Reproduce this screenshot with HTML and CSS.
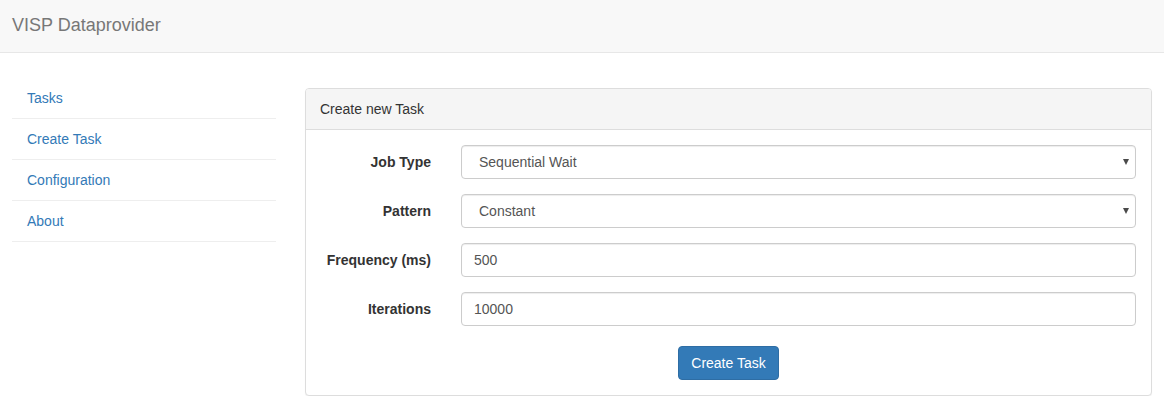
FILE: index.html
```html
<!DOCTYPE html>
<html lang="en">
<head>
<meta charset="utf-8">
<title>VISP Dataprovider</title>
<link rel="stylesheet" href="styles.css">
</head>
<body>
<nav class="navbar">
  <a class="brand" href="#">VISP Dataprovider</a>
</nav>
<div class="main">
  <aside class="sidebar">
    <ul class="side-nav">
      <li><a href="#">Tasks</a></li>
      <li><a href="#">Create Task</a></li>
      <li><a href="#">Configuration</a></li>
      <li><a href="#">About</a></li>
    </ul>
  </aside>
  <section class="content">
    <div class="panel">
      <div class="panel-heading">Create new Task</div>
      <form class="panel-body">
        <div class="form-row">
          <label class="form-label" for="jobType">Job Type</label>
          <div class="select-wrap">
            <select id="jobType" class="form-control form-select">
              <option>Sequential Wait</option>
            </select>
          </div>
        </div>
        <div class="form-row">
          <label class="form-label" for="pattern">Pattern</label>
          <div class="select-wrap">
            <select id="pattern" class="form-control form-select">
              <option>Constant</option>
            </select>
          </div>
        </div>
        <div class="form-row">
          <label class="form-label" for="freq">Frequency (ms)</label>
          <input id="freq" class="form-control" type="text" value="500">
        </div>
        <div class="form-row">
          <label class="form-label" for="iter">Iterations</label>
          <input id="iter" class="form-control" type="text" value="10000">
        </div>
        <div class="actions">
          <button type="button" class="btn-primary">Create Task</button>
        </div>
      </form>
    </div>
  </section>
</div>
</body>
</html>
```
FILE: styles.css
```css
* { box-sizing: border-box; }
html, body {
  margin: 0;
  padding: 0;
  background: #fff;
  font-family: "Liberation Sans", Arial, Helvetica, sans-serif;
  font-size: 14px;
  line-height: 20px;
  color: #333;
}
a { color: #337ab7; text-decoration: none; }

.navbar {
  height: 53px;
  background: #f8f8f8;
  border-bottom: 1px solid #e7e7e7;
  display: flex;
  align-items: center;
  padding-left: 12px;
}
.brand {
  color: #777;
  font-size: 18px;
  line-height: 20px;
  padding-bottom: 2px;
}

.main {
  display: flex;
  gap: 29px;
  padding: 25px 12px 0 12px;
}
.sidebar { width: 264px; flex: none; }
.side-nav {
  list-style: none;
  margin: 0;
  padding: 0;
}
.side-nav li { border-bottom: 1px solid #eee; }
.side-nav a {
  display: block;
  padding: 10px 15px;
  line-height: 20px;
}

.content { flex: 1; padding-top: 10px; }
.panel {
  border: 1px solid #ddd;
  border-radius: 4px;
  background: #fff;
  box-shadow: 0 1px 1px rgba(0,0,0,.05);
}
.panel-heading {
  background: #f5f5f5;
  border-bottom: 1px solid #ddd;
  border-radius: 3px 3px 0 0;
  padding: 10px 14px;
  color: #333;
}
.panel-body {
  padding: 15px;
  margin: 0;
}
.form-row {
  display: grid;
  grid-template-columns: 110px 1fr;
  column-gap: 30px;
  margin-bottom: 15px;
}
.form-label {
  text-align: right;
  font-weight: bold;
  padding-top: 7px;
  white-space: nowrap;
}
.form-control {
  display: block;
  width: 100%;
  height: 34px;
  padding: 6px 12px;
  font-family: inherit;
  font-size: 14px;
  line-height: 20px;
  color: #555;
  background: #fff;
  border: 1px solid #ccc;
  border-radius: 4px;
  box-shadow: inset 0 1px 1px rgba(0,0,0,.075);
}
.select-wrap { position: relative; }
.form-select {
  -webkit-appearance: none;
  appearance: none;
  padding-left: 17px;
  padding-right: 24px;
}
.select-wrap::after {
  content: "";
  position: absolute;
  right: 7px;
  top: 14px;
  width: 0;
  height: 0;
  border-left: 3.5px solid transparent;
  border-right: 3.5px solid transparent;
  border-top: 6px solid #4a4a4a;
  pointer-events: none;
}
.actions {
  display: flex;
  justify-content: center;
  padding-top: 5px;
}
.btn-primary {
  height: 34px;
  padding: 6px 12px;
  font-family: inherit;
  font-size: 14px;
  line-height: 20px;
  color: #fff;
  background: #337ab7;
  border: 1px solid #2e6da4;
  border-radius: 4px;
  cursor: pointer;
}
```
